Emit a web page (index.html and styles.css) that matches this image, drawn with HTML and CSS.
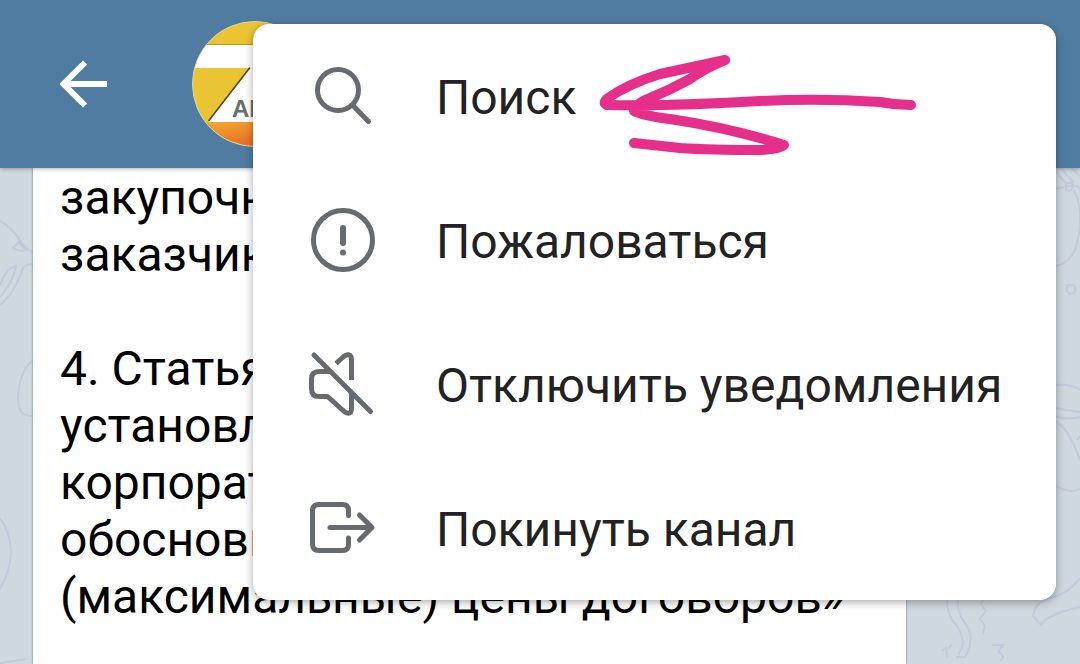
FILE: index.html
```html
<!DOCTYPE html>
<html lang="ru">
<head>
    <meta charset="UTF-8">
    <meta name="viewport" content="width=device-width, initial-scale=1.0">
    <title>Канал</title>
    <link rel="stylesheet" href="styles.css">
</head>
<body>
    <header class="header">
        <button class="back" type="button" aria-label="Назад">
            <svg width="48" height="48" viewBox="0 0 48 48">
                <path d="M47 24H5M25 2.500L3.500 24L25 45.500"/>
            </svg>
        </button>
        <svg class="avatar" width="126" height="126" viewBox="0 0 126 126">
            <defs>
                <clipPath id="round"><circle cx="63" cy="63" r="62.500"/></clipPath>
                <linearGradient id="orange" x1="0" y1="0" x2="1" y2="1">
                    <stop offset="0" stop-color="#f2b032"/>
                    <stop offset="0.600" stop-color="#ec7426"/>
                    <stop offset="1" stop-color="#e0551c"/>
                </linearGradient>
            </defs>
            <g clip-path="url(#round)">
                <rect width="126" height="126" fill="#eac432"/>
                <rect y="24" width="126" height="23" fill="#fff"/>
                <path d="M0 23.500H126" stroke="#b99428"/>
                <path d="M58 46.500L16.500 101H126V46.500Z" fill="#fff"/>
                <path d="M58 46.500L16.500 100" stroke="#4d431c" stroke-width="1.500"/>
                <rect y="101" width="126" height="25" fill="url(#orange)"/>
                <text class="avatar-text" x="40" y="96">АН</text>
            </g>
            <circle cx="63" cy="63" r="62.500" fill="none" stroke="#dcd6a8"/>
        </svg>
    </header>

    <main class="chat">
        <svg class="doodle doodle-left" viewBox="0 0 33 496">
            <path d="M0 53Q13 60 21 74Q28 83 33 84M33 96Q26 96 23 100Q14 126 0 137M13 80L19 74Q22 79 26 82Q20 84 13 80ZM0 117Q7 99 16 98Q13 114 0 129"/>
            <path d="M33 192Q19 204 18 229Q17 249 33 248"/>
            <path d="M0 350Q10 363 11 384Q10 404 0 421"/>
            <path d="M0 495L27 491"/>
        </svg>
        <article class="bubble">
            <p>закупочной<br>заказчик</p>
            <p>4. Статья<br>установлен<br>корпоратив<br>обосновыв<br>(максимальные) цены договоров»</p>
        </article>
        <svg class="doodle doodle-right" viewBox="0 0 174 496">
            <path d="M148 0Q153 9 160 15M156 0Q161 9 168 14M165 0L174 8M150 21Q174 14 174 22M160 16Q166 13 167 18Q165 25 160 22ZM168 22Q180 46 169 82Q162 96 150 98"/>
            <circle cx="165" cy="121" r="4.500"/>
            <path d="M150 217Q166 216 174 222M150 240Q166 243 174 244M150 249Q165 252 174 249M150 254Q162 259 174 292M171 272L174 268M150 318Q164 326 174 321"/>
            <path d="M174 410Q162 426 142 431Q129 434 127 448L135 457Q140 447 174 439"/>
            <path d="M41 430Q40 447 51 458Q62 475 52 486M52 430Q50 444 59 455Q70 470 59 489L50 489M78 430L75 436L80 443L74 451L79 458L77 466"/>
            <path d="M36 483L40 480L41 489M46 476L42 481M86 477H97L92 484Q101 488 94 493"/>
        </svg>
    </main>

    <div class="menu">
        <button class="menu-item" type="button">
            <svg class="icon" width="64" height="64" viewBox="0 0 64 64">
                <circle cx="27" cy="26" r="20.500"/>
                <path d="M41.500 41L57.500 57.500"/>
            </svg>
            <span>Поиск</span>
        </button>
        <button class="menu-item" type="button">
            <svg class="icon" width="64" height="64" viewBox="0 0 64 64">
                <circle cx="32" cy="32" r="29.500"/>
                <path d="M32 20V35" stroke-width="6"/>
                <path d="M32 44.500V44.600" stroke-width="6"/>
            </svg>
            <span>Пожаловаться</span>
        </button>
        <button class="menu-item" type="button">
            <svg class="icon" width="64" height="64" viewBox="0 0 64 64">
                <path d="M3 3L59.500 59.500"/>
                <path d="M19 19.500H8Q0.500 19.500 0.500 27V37Q0.500 44.500 8 44.500H16.500L31 57.500C36 62.500 40.500 63 40.500 56V41"/>
                <path d="M25 11.500L31 6C36 1 40.500 1.500 40.500 8V28" stroke-linecap="butt"/>
            </svg>
            <span>Отключить уведомления</span>
        </button>
        <button class="menu-item" type="button">
            <svg class="icon" width="64" height="64" viewBox="0 0 64 64">
                <path d="M37.500 19.500V14.500Q37.500 8.500 31.500 8.500H8Q1.500 8.500 1.500 15V48Q1.500 54.500 8 54.500H31.500Q37.500 54.500 37.500 48.500V42"/>
                <path d="M19 31.500H60M48.500 19L61 31.500L48.500 44"/>
            </svg>
            <span>Покинуть канал</span>
        </button>
        <!-- стрелка от руки -->
        <svg class="scribble" width="350" height="130" viewBox="0 0 350 130">
            <path d="M331 65Q315 65 300 62Q240 58 180 61Q100 66 27 65Q22 63 28 58Q48 44 80 34L145 20Q125 28 110 39Q90 50 68 59Q54 65 54 71Q64 76 90 79Q150 88 204 105Q200 109 180 110Q130 110 100 108L54 103"/>
        </svg>
    </div>
</body>
</html>
```
FILE: styles.css
```css
body {
    margin: 0;
    height: 100vh;
    display: flex;
    flex-direction: column;
    overflow: hidden;
    font-family: Roboto, "Noto Sans", sans-serif;
    font-size: 48px;
    line-height: 57px;
    background-color: #cfd8df;
}
button {
    border: none;
    background: none;
    font: inherit;
    color: inherit;
    cursor: pointer;
}
.header {
    display: flex;
    align-items: center;
    gap: 84px;
    height: 168px;
    padding-left: 60px;
    flex-shrink: 0;
    background-color: #507ca1;
    box-shadow: 0 1px 4px rgba(0,0,0,0.3);
    position: relative;
}
.back {
    display: flex;
    padding: 0;
}
.back path {
    fill: none;
    stroke: #fff;
    stroke-width: 6;
}
.avatar-text {
    font-family: "Liberation Sans", Arial, sans-serif;
    font-size: 24px;
    font-weight: bold;
    fill: #6e6e6e;
}
.chat {
    display: flex;
    flex: 1;
    min-height: 0;
}
.doodle {
    flex-shrink: 0;
    height: 496px;
    fill: none;
    stroke: #c3cad9;
    stroke-width: 2;
}
.doodle-left {
    width: 33px;
}
.doodle-right {
    width: 174px;
}
.bubble {
    flex: 1;
    padding: 1px 27px;
    background-color: #fff;
    color: #000;
    white-space: nowrap;
    box-shadow: 0 0 2px rgba(60,80,100,0.8);
}
.bubble p {
    margin: 0 0 57px;
}
.menu {
    position: absolute;
    top: 24px;
    right: 24px;
    left: 253px;
    border-radius: 16px;
    background-color: #fff;
    color: #222;
    box-shadow: 0 2px 8px rgba(0,0,0,0.35);
}
.menu-item {
    display: flex;
    align-items: center;
    gap: 61px;
    width: 100%;
    height: 144px;
    padding: 0 0 0 58px;
    text-align: left;
    white-space: nowrap;
}
.menu-item span {
    padding-top: 2px;
}
.icon {
    flex-shrink: 0;
    overflow: visible;
    fill: none;
    stroke: #676b6f;
    stroke-width: 5;
    stroke-linecap: round;
    stroke-linejoin: round;
}
.scribble {
    position: absolute;
    top: 16px;
    left: 327px;
    fill: none;
    stroke: #e62e8b;
    stroke-width: 10;
    stroke-linecap: round;
    stroke-linejoin: round;
    pointer-events: none;
}
```
